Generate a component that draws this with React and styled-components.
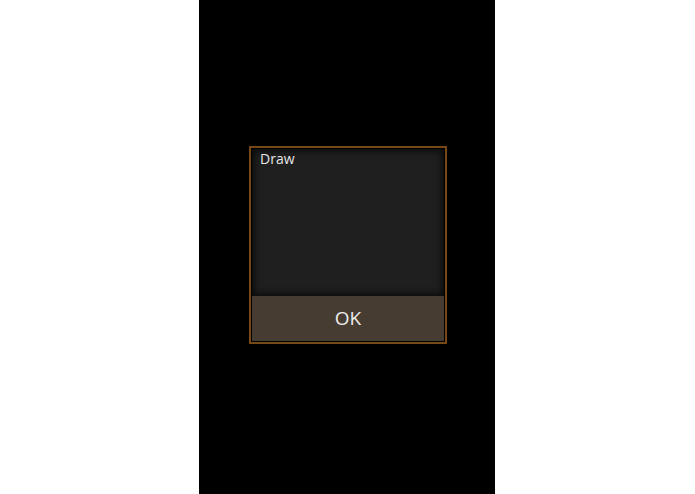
import React from "react";
import styled, { createGlobalStyle } from "styled-components";

const Global = createGlobalStyle`
  html, body { margin: 0; padding: 0; background: #ffffff; }
  body { font-family: "Open Sans", "Noto Sans", sans-serif; }
`;

const Page = styled.div`
  display: grid;
  grid-template-columns: 199px 296px 1fr;
  height: 494px;
`;

const Screen = styled.div`
  grid-column: 2;
  background: #000;
  display: flex;
  flex-direction: column;
  align-items: flex-start;
  padding: 146px 0 0 50px;
  box-sizing: border-box;
`;

const Dialog = styled.div`
  width: 198px;
  height: 198px;
  box-sizing: border-box;
  border: 2px solid #774916;
  padding: 1px;
  background: #000;
  display: flex;
  flex-direction: column;
`;

const Body = styled.div`
  flex: 1;
  background: #1f1f1f;
  box-shadow: inset 0 0 7px 2px rgba(0, 0, 0, 0.7);
  padding: 0 8px;
  color: #e6e6e6;
  font-size: 14px;
  line-height: 20px;
`;

const Button = styled.div`
  height: 45px;
  padding-bottom: 2px;
  box-sizing: border-box;
  background: #463c31;
  color: #ececec;
  display: flex;
  align-items: center;
  justify-content: center;
  font-size: 19px;
`;

export default function App() {
  return (
    <>
      <Global />
      <Page>
        <Screen>
          <Dialog>
            <Body>Draw</Body>
            <Button>OK</Button>
          </Dialog>
        </Screen>
      </Page>
    </>
  );
}
